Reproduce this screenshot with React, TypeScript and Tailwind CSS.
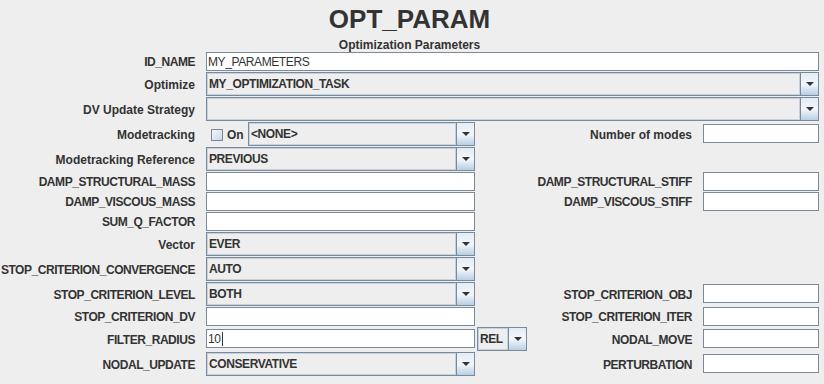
import React from "react";

// Metal-ish colours
const BORDER = "border-[#7A8A99]";

function Label({ text, w }: { text: string; w: string }) {
  // upper case labels render a bit tighter in the original
  const caps = text === text.toUpperCase();
  return (
    <div
      className={`${w} shrink-0 self-center pr-[11px] text-right text-[12px] font-bold leading-[14px] text-[#333333] whitespace-nowrap ${
        caps ? "tracking-[-0.45px]" : ""
      }`}
    >
      {text}
    </div>
  );
}

function TextField({ value = "", caret = false, offset = false }: { value?: string; caret?: boolean; offset?: boolean }) {
  return (
    <div
      className={`flex h-[19px] w-full items-center border ${BORDER} bg-white pl-[1px] text-[12px] leading-[14px] tracking-[-0.4px] text-[#333333] ${
        offset ? "mt-[2px]" : ""
      }`}
    >
      <span>{value}</span>
      {caret && <span className="ml-[1px] h-[14px] w-[1px] bg-[#333333]" />}
    </div>
  );
}

function Arrow() {
  return (
    <svg width="8" height="4" viewBox="0 0 8 4" className="block">
      <polygon points="0,0 8,0 4,4" fill="#333333" />
    </svg>
  );
}

function Combo({ value = "", className = "" }: { value?: string; className?: string }) {
  return (
    <div className={`flex h-[24px] border ${BORDER} bg-[#EEEEEE] ${className}`}>
      <div className="flex min-w-0 flex-1 items-center border border-[#C5D3E0] pl-[1px] text-[12px] font-bold leading-[14px] tracking-[-0.4px] text-[#333333] whitespace-nowrap">
        {value}
      </div>
      <div className={`flex w-[18px] shrink-0 items-center justify-center border-l ${BORDER} bg-gradient-to-b from-[#E3ECF5] via-[#F4F7FB] to-[#B8CFE5]`}>
        <Arrow />
      </div>
    </div>
  );
}

function Row({ h, children }: { h: "text" | "combo"; children: React.ReactNode }) {
  return <div className={`flex ${h === "text" ? "h-[20px]" : "h-[25px]"}`}>{children}</div>;
}

export default function App() {
  return (
    <div className="h-[384px] w-[824px] overflow-hidden bg-[#EEEEEE] pr-[5px] font-['Liberation_Sans',Arial,sans-serif] text-[#333333]">
      {/* header */}
      <div className="pt-[6px] text-center">
        <div className="h-[26px] text-[26px] font-bold leading-[26px] text-[#333333]">OPT_PARAM</div>
        <div className="mt-[7px] h-[12px] text-[12px] font-bold leading-[12px] text-[#333333]">Optimization Parameters</div>
      </div>

      <div className="mt-[1px] flex flex-col">
        <Row h="text">
          <Label text="ID_NAME" w="w-[206px]" />
          <div className="w-[613px] shrink-0">
            <TextField value="MY_PARAMETERS" />
          </div>
        </Row>

        <Row h="combo">
          <Label text="Optimize" w="w-[206px]" />
          <div className="w-[613px] shrink-0">
            <Combo value="MY_OPTIMIZATION_TASK" />
          </div>
        </Row>

        <Row h="combo">
          <Label text="DV Update Strategy" w="w-[206px]" />
          <div className="w-[613px] shrink-0">
            <Combo />
          </div>
        </Row>

        <Row h="combo">
          <Label text="Modetracking" w="w-[206px]" />
          <div className="flex w-[269px] shrink-0">
            <div className="flex w-[42px] shrink-0 items-center pl-[5px]">
              <div className={`h-[12px] w-[12px] border ${BORDER} bg-gradient-to-br from-[#F4F7FB] to-[#C9D8E7]`} />
              <span className="ml-[4px] text-[12px] font-bold leading-[14px]">On</span>
            </div>
            <Combo value="<NONE>" className="flex-1" />
          </div>
          <div className="w-[52px] shrink-0" />
          <Label text="Number of modes" w="w-[176px]" />
          <div className="w-[116px] shrink-0">
            <TextField offset />
          </div>
        </Row>

        <Row h="combo">
          <Label text="Modetracking Reference" w="w-[206px]" />
          <div className="w-[269px] shrink-0">
            <Combo value="PREVIOUS" />
          </div>
        </Row>

        <Row h="text">
          <Label text="DAMP_STRUCTURAL_MASS" w="w-[206px]" />
          <div className="w-[269px] shrink-0">
            <TextField />
          </div>
          <div className="w-[52px] shrink-0" />
          <Label text="DAMP_STRUCTURAL_STIFF" w="w-[176px]" />
          <div className="w-[116px] shrink-0">
            <TextField />
          </div>
        </Row>

        <Row h="text">
          <Label text="DAMP_VISCOUS_MASS" w="w-[206px]" />
          <div className="w-[269px] shrink-0">
            <TextField />
          </div>
          <div className="w-[52px] shrink-0" />
          <Label text="DAMP_VISCOUS_STIFF" w="w-[176px]" />
          <div className="w-[116px] shrink-0">
            <TextField />
          </div>
        </Row>

        <Row h="text">
          <Label text="SUM_Q_FACTOR" w="w-[206px]" />
          <div className="w-[269px] shrink-0">
            <TextField />
          </div>
        </Row>

        <Row h="combo">
          <Label text="Vector" w="w-[206px]" />
          <div className="w-[269px] shrink-0">
            <Combo value="EVER" />
          </div>
        </Row>

        <Row h="combo">
          <Label text="STOP_CRITERION_CONVERGENCE" w="w-[206px]" />
          <div className="w-[269px] shrink-0">
            <Combo value="AUTO" />
          </div>
        </Row>

        <Row h="combo">
          <Label text="STOP_CRITERION_LEVEL" w="w-[206px]" />
          <div className="w-[269px] shrink-0">
            <Combo value="BOTH" />
          </div>
          <div className="w-[52px] shrink-0" />
          <Label text="STOP_CRITERION_OBJ" w="w-[176px]" />
          <div className="w-[116px] shrink-0">
            <TextField offset />
          </div>
        </Row>

        <Row h="text">
          <Label text="STOP_CRITERION_DV" w="w-[206px]" />
          <div className="w-[269px] shrink-0">
            <TextField />
          </div>
          <div className="w-[52px] shrink-0" />
          <Label text="STOP_CRITERION_ITER" w="w-[176px]" />
          <div className="w-[116px] shrink-0">
            <TextField />
          </div>
        </Row>

        <Row h="combo">
          <Label text="FILTER_RADIUS" w="w-[206px]" />
          <div className="w-[269px] shrink-0">
            <TextField value="10" caret offset />
          </div>
          <div className="w-[52px] shrink-0 pl-[2px]">
            <Combo value="REL" />
          </div>
          <Label text="NODAL_MOVE" w="w-[176px]" />
          <div className="w-[116px] shrink-0">
            <TextField offset />
          </div>
        </Row>

        <Row h="combo">
          <Label text="NODAL_UPDATE" w="w-[206px]" />
          <div className="w-[269px] shrink-0">
            <Combo value="CONSERVATIVE" />
          </div>
          <div className="w-[52px] shrink-0" />
          <Label text="PERTURBATION" w="w-[176px]" />
          <div className="w-[116px] shrink-0">
            <TextField offset />
          </div>
        </Row>
      </div>
    </div>
  );
}
